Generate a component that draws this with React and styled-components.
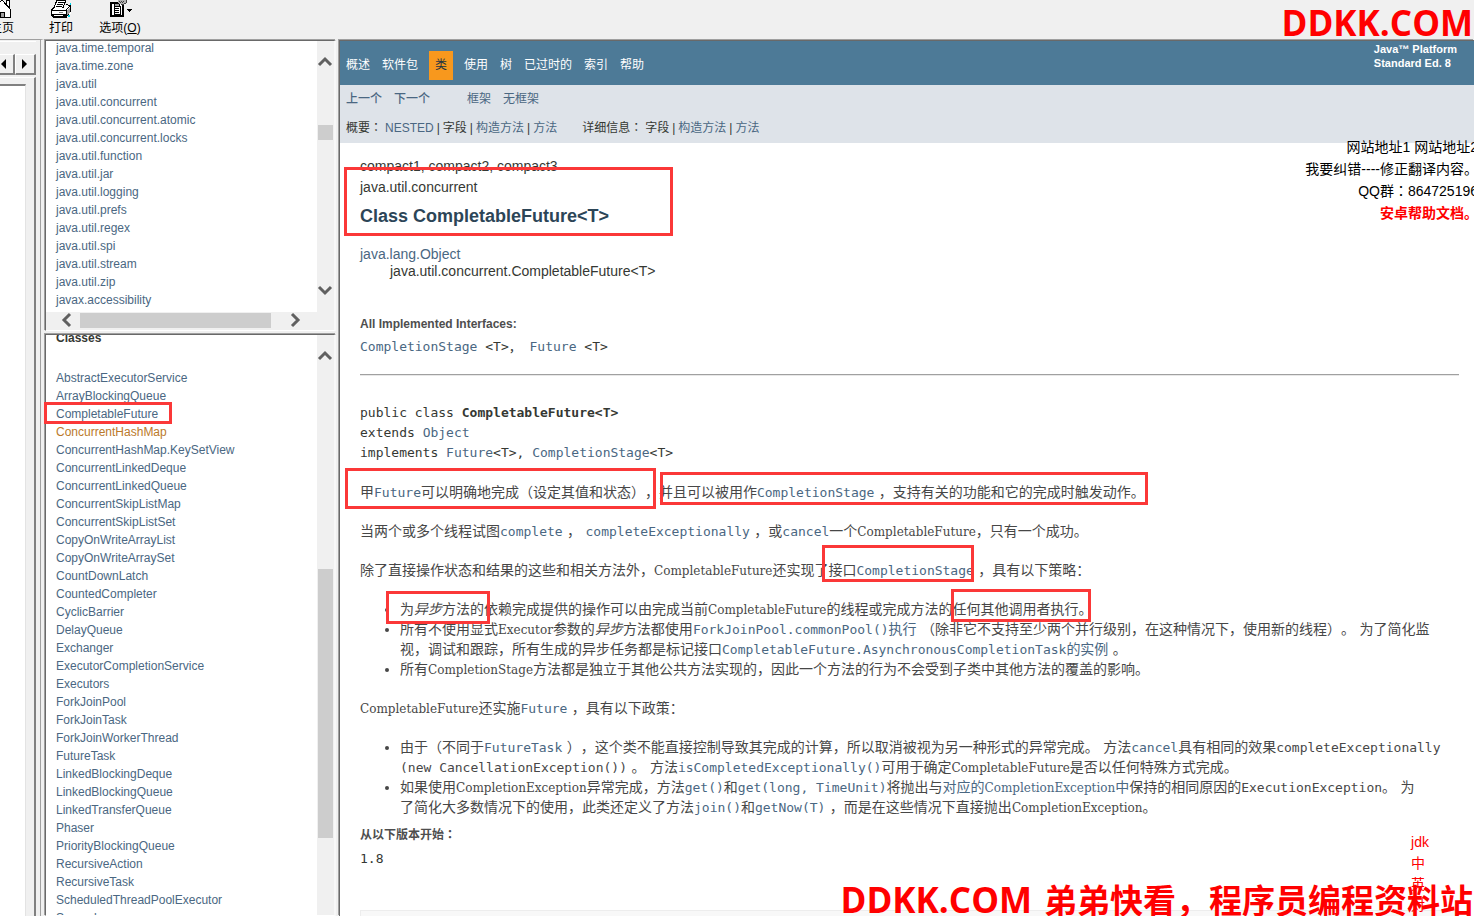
import React from "react";
import styled, { createGlobalStyle, css } from "styled-components";

const packages = [
  "java.time.temporal",
  "java.time.zone",
  "java.util",
  "java.util.concurrent",
  "java.util.concurrent.atomic",
  "java.util.concurrent.locks",
  "java.util.function",
  "java.util.jar",
  "java.util.logging",
  "java.util.prefs",
  "java.util.regex",
  "java.util.spi",
  "java.util.stream",
  "java.util.zip",
  "javax.accessibility",
];

const classes = [
  "AbstractExecutorService",
  "ArrayBlockingQueue",
  "CompletableFuture",
  "ConcurrentHashMap",
  "ConcurrentHashMap.KeySetView",
  "ConcurrentLinkedDeque",
  "ConcurrentLinkedQueue",
  "ConcurrentSkipListMap",
  "ConcurrentSkipListSet",
  "CopyOnWriteArrayList",
  "CopyOnWriteArraySet",
  "CountDownLatch",
  "CountedCompleter",
  "CyclicBarrier",
  "DelayQueue",
  "Exchanger",
  "ExecutorCompletionService",
  "Executors",
  "ForkJoinPool",
  "ForkJoinTask",
  "ForkJoinWorkerThread",
  "FutureTask",
  "LinkedBlockingDeque",
  "LinkedBlockingQueue",
  "LinkedTransferQueue",
  "Phaser",
  "PriorityBlockingQueue",
  "RecursiveAction",
  "RecursiveTask",
  "ScheduledThreadPoolExecutor",
  "Semaphore",
];

// red frames drawn over the page
const marks = [
  { x: 344, y: 167, w: 329, h: 69 },
  { x: 44, y: 402, w: 128, h: 22 },
  { x: 345, y: 468, w: 311, h: 41 },
  { x: 660, y: 472, w: 488, h: 33 },
  { x: 822, y: 545, w: 152, h: 37 },
  { x: 386, y: 591, w: 104, h: 33 },
  { x: 951, y: 589, w: 140, h: 33 },
];

const Chevron = ({ dir }) => {
  const points = {
    up: "2,11 8,5 14,11",
    down: "2,5 8,11 14,5",
    left: "11,2 5,8 11,14",
    right: "5,2 11,8 5,14",
  };
  return (
    <svg width="16" height="16" viewBox="0 0 16 16">
      <polyline points={points[dir]} fill="none" stroke="#606060" strokeWidth="3" />
    </svg>
  );
};

const HomeIcon = () => (
  <svg width="24" height="20" viewBox="0 0 24 20" shapeRendering="crispEdges">
    <path d="M4 9h16v9H4z" fill="#fff" />
    <path d="M16 0h3v7h-3z" fill="#fff" stroke="#000" />
    <path d="M2 10L12 0l9 10" fill="#fff" stroke="#000" strokeWidth="1" />
    <path d="M4 9v8h16V9" fill="none" stroke="#000" />
    <path d="M10 12h4v5h-4z" fill="#a0a0a0" stroke="#000" />
  </svg>
);

const PrintIcon = () => (
  <svg width="24" height="20" viewBox="0 0 24 20" shapeRendering="crispEdges">
    <path d="M8 0h9l-4 10H4z" fill="#fff" stroke="#000" />
    <path d="M9 2h6M8 4h6M7 6h6" stroke="#000" />
    <path d="M2 10l3-2h9l4-4 4 3v6l-4 4H4l-2-2z" fill="#fff" />
    <path d="M2 10h15v7H4l-2-2zM17 10l4-4v6l-4 5M2 10l3-2M17 4l4 2" fill="none" stroke="#000" />
    <path d="M2 14h15v3H4z" fill="#000" />
    <path d="M5 15h9v1H5z" fill="#fff" />
    <path d="M18 10l3-3v5l-3 3z" fill="#a0a0a0" />
    <path d="M10 12h4v1h-4z" fill="#808080" />
    <path d="M19 15h2v2h-2zM21 3h1v2h-1z" fill="#00d8f0" />
  </svg>
);

const OptionsIcon = () => (
  <svg width="26" height="20" viewBox="0 0 26 20" shapeRendering="crispEdges">
    <path d="M4 3h12v13H4z" fill="#fff" stroke="#000" strokeWidth="2" />
    <path d="M7 6h6v8H7z" fill="#fff" stroke="#000" />
    <path d="M7 3h5v3H7z" fill="#a0a0a0" stroke="#000" />
    <path d="M8 8h4M8 10h4M8 12h4" stroke="#000" />
    <path d="M11 0h7l2 2-4 3-5-2z" fill="#b0b0b0" />
    <path d="M12 1h1v1h-1zM14 1h1v1h-1zM16 1h1v1h-1zM13 2h1v1h-1zM15 2h1v1h-1zM14 4h3v1h-3zM17 3h2v1h-2zM19 0h1v3h-1z" fill="#404040" />
    <path d="M20 9h5v1h-1v1h-1v1h-1v-1h-1v-1h-1z" fill="#000" />
  </svg>
);

const VerticalBar = ({ before, size, end }) => (
  <VBar>
    <ArrowButton aria-label="scroll up">
      <Chevron dir="up" />
    </ArrowButton>
    <VTrack>
      <VThumb style={{ marginTop: before, height: size }} />
    </VTrack>
    {end && (
      <ArrowButton aria-label="scroll down">
        <Chevron dir="down" />
      </ArrowButton>
    )}
  </VBar>
);

const App = () => (
  <Page>
    <GlobalStyle />
    <Toolbar>
      <Tool $w={60}>
        <HomeIcon />
        <span>主页</span>
      </Tool>
      <Tool $w={58}>
        <PrintIcon />
        <span>打印</span>
      </Tool>
      <Tool $w={60}>
        <OptionsIcon />
        <span>
          选项(<u>O</u>)
        </span>
      </Tool>
      <Brand>DDKK.COM</Brand>
    </Toolbar>
    <Body>
      <Side>
        <SidePanel>
          <TabButtons>
            <TabButton aria-label="previous tab">
              <svg width="5" height="10" viewBox="0 0 5 10">
                <path d="M5 0v10L0 5z" />
              </svg>
            </TabButton>
            <TabButton aria-label="next tab">
              <svg width="5" height="10" viewBox="0 0 5 10">
                <path d="M0 0v10l5-5z" />
              </svg>
            </TabButton>
          </TabButtons>
          <SideBox>
            <SideTree />
          </SideBox>
        </SidePanel>
      </Side>
      <Frames>
        <Frame>
          <FrameList $shift={2}>
            {packages.map((name) => (
              <li key={name}>
                <a href="#">{name}</a>
              </li>
            ))}
          </FrameList>
          <VerticalBar before={54} size={15} end />
          <HBar>
            <ArrowButton aria-label="scroll left">
              <Chevron dir="left" />
            </ArrowButton>
            <HThumb />
            <ArrowButton aria-label="scroll right">
              <Chevron dir="right" />
            </ArrowButton>
          </HBar>
        </Frame>
        <Frame>
          <FrameList $shift={6}>
            <ListTitle>Classes</ListTitle>
            {classes.map((name) => (
              <ListItem key={name} $active={name === "ConcurrentHashMap"}>
                <a href="#">{name}</a>
              </ListItem>
            ))}
          </FrameList>
          <VerticalBar before={204} size={269} />
        </Frame>
      </Frames>
      <Doc>
        <TopNav>
          <NavList>
            <NavItem>
              <a href="#">概述</a>
            </NavItem>
            <NavItem>
              <a href="#">软件包</a>
            </NavItem>
            <NavItem $active>类</NavItem>
            <NavItem>
              <a href="#">使用</a>
            </NavItem>
            <NavItem>
              <a href="#">树</a>
            </NavItem>
            <NavItem>
              <a href="#">已过时的</a>
            </NavItem>
            <NavItem>
              <a href="#">索引</a>
            </NavItem>
            <NavItem>
              <a href="#">帮助</a>
            </NavItem>
          </NavList>
          <About>
            Java™ Platform
            <br />
            Standard Ed. 8
          </About>
        </TopNav>
        <SubNav>
          <SubRow $h={27}>
            <SubGroup $gap={12} $bold>
              <a href="#">上一个</a>
              <a href="#">下一个</a>
            </SubGroup>
            <SubGroup $gap={12} $before={37}>
              <a href="#">框架</a>
              <a href="#">无框架</a>
            </SubGroup>
          </SubRow>
          <SubRow $h={31}>
            <SubGroup $gap={3}>
              <span>
                概要<Colon>：</Colon>
              </span>
              <a href="#">NESTED</a>
              <span>|</span>
              <span>字段</span>
              <span>|</span>
              <a href="#">构造方法</a>
              <span>|</span>
              <a href="#">方法</a>
            </SubGroup>
            <SubGroup $gap={3} $before={25}>
              <span>
                详细信息<Colon>：</Colon>
              </span>
              <span>字段</span>
              <span>|</span>
              <a href="#">构造方法</a>
              <span>|</span>
              <a href="#">方法</a>
            </SubGroup>
          </SubRow>
        </SubNav>
        <Content>
          <Package>compact1, compact2, compact3</Package>
          <Package>java.util.concurrent</Package>
          <Title>Class CompletableFuture&lt;T&gt;</Title>
          <Tree>
            <li>
              <a href="#">java.lang.Object</a>
            </li>
            <TreeChild>java.util.concurrent.CompletableFuture&lt;T&gt;</TreeChild>
          </Tree>
          <Definition>
            <dt>All Implemented Interfaces:</dt>
            <dd>
              <a href="#">CompletionStage</a> &lt;T&gt;，{" "}
              <a href="#">Future</a> &lt;T&gt;
            </dd>
          </Definition>
          <Rule />
          <Signature>
            public class <b>CompletableFuture&lt;T&gt;</b>
            {"\n"}extends <a href="#">Object</a>
            {"\n"}implements <a href="#">Future</a>&lt;T&gt;,{" "}
            <a href="#">CompletionStage</a>&lt;T&gt;
          </Signature>
          <Block>
            甲<CodeLink href="#">Future</CodeLink>
            可以明确地完成（设定其值和状态），并且可以被用作
            <CodeLink href="#">CompletionStage</CodeLink>
            {" ，支持有关的功能和它的完成时触发动作。"}
          </Block>
          <Block>
            当两个或多个线程试图<CodeLink href="#">complete</CodeLink>
            {" ， "}
            <CodeLink href="#">completeExceptionally</CodeLink>
            {" ，或"}
            <CodeLink href="#">cancel</CodeLink>一个
            <Latin>CompletableFuture</Latin>，只有一个成功。
          </Block>
          <Block>
            除了直接操作状态和结果的这些和相关方法外，
            <Latin>CompletableFuture</Latin>还实现了接口
            <CodeLink href="#">CompletionStage</CodeLink>
            {" ，具有以下策略："}
          </Block>
          <Points>
            <li>
              为<em>异步</em>方法的依赖完成提供的操作可以由完成当前
              <Latin>CompletableFuture</Latin>
              的线程或完成方法的任何其他调用者执行。
            </li>
            <li>
              所有不使用显式<Latin>Executor</Latin>参数的<em>异步</em>方法都使用
              <CodeLink href="#">ForkJoinPool.commonPool()</CodeLink>
              <a href="#">执行</a>
              {" （除非它不支持至少两个并行级别，在这种情况下，使用新的线程）。 为了简化监"}
              <br />
              视，调试和跟踪，所有生成的异步任务都是标记接口
              <CodeLink href="#">
                CompletableFuture.AsynchronousCompletionTask
              </CodeLink>
              <a href="#">的实例</a>
              {"  。"}
            </li>
            <li>
              所有<Latin>CompletionStage</Latin>
              方法都是独立于其他公共方法实现的，因此一个方法的行为不会受到子类中其他方法的覆盖的影响。
            </li>
          </Points>
          <Block>
            <Latin>CompletableFuture</Latin>还实施
            <CodeLink href="#">Future</CodeLink>
            {" ，具有以下政策："}
          </Block>
          <Points>
            <li>
              由于（不同于<CodeLink href="#">FutureTask</CodeLink>
              {" ），这个类不能直接控制导致其完成的计算，所以取消被视为另一种形式的异常完成。 方法"}
              <CodeLink href="#">cancel</CodeLink>具有相同的效果
              <Code>completeExceptionally</Code>
              <br />
              <Code>(new CancellationException())</Code>
              {" 。 方法"}
              <CodeLink href="#">isCompletedExceptionally()</CodeLink>可用于确定
              <Latin>CompletableFuture</Latin>是否以任何特殊方式完成。
            </li>
            <li>
              如果使用<Latin>CompletionException</Latin>异常完成，方法
              <CodeLink href="#">get()</CodeLink>和
              <CodeLink href="#">get(long, TimeUnit)</CodeLink>将抛出与
              <a href="#">
                对应的<Latin>CompletionException</Latin>中
              </a>
              保持的相同原因的<Code>ExecutionException</Code>。 为
              <br />
              了简化大多数情况下的使用，此类还定义了方法
              <CodeLink href="#">join()</CodeLink>和
              <CodeLink href="#">getNow(T)</CodeLink>
              {" ，而是在这些情况下直接抛出"}
              <Latin>CompletionException</Latin>。
            </li>
          </Points>
          <Since>
            <dt>
              从以下版本开始<Colon>：</Colon>
            </dt>
            <dd>1.8</dd>
          </Since>
          <Summary />
        </Content>
        <SiteNotes>
          网站地址1 网站地址2
          <br />
          我要纠错----修正翻译内容。
          <br />
          QQ群<Colon>：</Colon>864725196
          <br />
          <strong>安卓帮助文档。</strong>
        </SiteNotes>
      </Doc>
    </Body>
    <LangSwitch>
      <a href="#">jdk</a>
      <a href="#">中</a>
      <a href="#">英</a>
      <a href="#">对</a>
    </LangSwitch>
    <Footmark>
      <span>DDKK.COM</span>
      <span>弟弟快看，程序员编程资料站</span>
    </Footmark>
    {marks.map((m) => (
      <Mark
        key={`${m.x}-${m.y}`}
        style={{ left: m.x, top: m.y, width: m.w, height: m.h }}
      />
    ))}
  </Page>
);

const sans = css`
  font-family: "Liberation Sans", "Noto Sans CJK SC", sans-serif;
`;

const mono = css`
  font-family: "DejaVu Sans Mono", "Noto Sans CJK SC", monospace;
  font-size: 13px;
`;

const GlobalStyle = createGlobalStyle`
  * {
    box-sizing: border-box;
  }

  body {
    margin: 0;
    overflow: hidden;
    background: #f0f0f0;
    text-spacing-trim: space-all;
  }

  ul, dl, dd, p, pre, h2 {
    margin: 0;
    padding: 0;
  }

  ul {
    list-style: none;
  }

  a {
    color: #4a6782;
    text-decoration: none;
  }
`;

const Page = styled.div`
  ${sans}
  position: relative;
  display: flex;
  flex-direction: column;
  height: 100vh;
  overflow: hidden;
  font-size: 12px;
  color: #353833;
`;

const Toolbar = styled.header`
  display: flex;
  flex: none;
  height: 39px;
  padding-right: 1px;
  margin-left: -28px;
`;

const Tool = styled.button`
  ${sans}
  display: flex;
  flex-direction: column;
  align-items: center;
  width: ${({ $w }) => $w}px;
  padding: 0;
  border: 0;
  background: none;
  font-size: 12px;
  line-height: 16px;
  color: #000;

  svg {
    flex: none;
  }
`;

const Brand = styled.div`
  margin-left: auto;
  font-family: "Open Sans", sans-serif;
  font-size: 35px;
  font-weight: 700;
  line-height: 46px;
  color: #ff0000;
`;

const Body = styled.div`
  display: grid;
  flex: 1;
  grid-template-columns: 44px 292px 1fr;
  min-height: 0;
`;

const Side = styled.div`
  border-top: 1px solid #a0a0a0;
  border-right: 3px solid #f0f0f0;
  box-shadow: inset -1px 0 #a0a0a0;
  padding-top: 1px;
  overflow: hidden;
`;

const SidePanel = styled.div`
  display: flex;
  flex-direction: column;
  width: 36px;
  height: 100%;
  padding-top: 12px;
  border-top: 1px solid #fff;
`;

const TabButtons = styled.div`
  display: flex;
  margin-left: -7px;
`;

const TabButton = styled.button`
  display: flex;
  align-items: center;
  justify-content: center;
  width: 22px;
  height: 21px;
  padding: 0;
  border: 1px solid #fff;
  border-right: 2px solid #808080;
  border-bottom: 2px solid #808080;
  background: #f0f0f0;
`;

const SideBox = styled.div`
  display: flex;
  flex: 1;
  margin-top: 2px;
  padding: 6px 8px 0 0;
  border-top: 1px solid #fff;
  border-right: 2px solid #808080;
`;

const SideTree = styled.div`
  flex: 1;
  border-top: 2px solid #808080;
  border-right: 1px solid #e3e3e3;
  background: #fff;
`;

const Frames = styled.div`
  display: grid;
  grid-template-rows: 291px 1fr;
  row-gap: 3px;
  min-height: 0;
  padding: 1px 0 0 1px;
`;

const Frame = styled.section`
  display: grid;
  grid-template-columns: 1fr 17px;
  grid-template-rows: 1fr auto;
  min-height: 0;
  overflow: hidden;
  border: 1px solid #696969;
  border-right: 2px solid #f8f8f8;
  border-bottom-color: #fff;
  box-shadow: -1px -1px 0 #a0a0a0;
  background: #f0f0f0;
`;

const FrameList = styled.ul`
  min-height: 0;
  overflow: hidden;
  padding-left: 10px;
  background: #fff;
  line-height: 18px;

  li:first-child {
    margin-top: -${({ $shift }) => $shift}px;
  }
`;

const ListTitle = styled.li`
  margin-bottom: 22px;
  font-weight: 700;
`;

const ListItem = styled.li`
  a {
    color: ${({ $active }) => ($active ? "#bb7a2a" : "#4a6782")};
  }
`;

const VBar = styled.div`
  display: flex;
  flex-direction: column;
  align-items: center;
  padding: 12px 0 13px;
`;

const VTrack = styled.div`
  flex: 1;
  width: 15px;
`;

const VThumb = styled.div`
  background: #cdcdcd;
`;

const HBar = styled.div`
  display: flex;
  grid-column: 1 / 3;
  align-items: center;
  height: 18px;
  padding: 0 30px 2px 13px;
`;

const HThumb = styled.div`
  flex: 1;
  height: 15px;
  margin: 0 16px 0 4px;
  background: #cdcdcd;
`;

const ArrowButton = styled.button`
  display: flex;
  flex: none;
  width: 17px;
  height: 18px;
  padding: 1px 0;
  border: 0;
  background: none;
`;

const Doc = styled.main`
  position: relative;
  display: flex;
  flex-direction: column;
  min-width: 0;
  min-height: 0;
  margin: 1px 0 0 3px;
  border-top: 1px solid #696969;
  border-left: 1px solid #696969;
  box-shadow: -1px -1px 0 #a0a0a0;
  background: #fff;
`;

const TopNav = styled.nav`
  display: flex;
  flex: none;
  justify-content: space-between;
  height: 44px;
  background: #4d7a97;
`;

const NavList = styled.ul`
  display: flex;
  padding-top: 10px;
`;

const NavItem = styled.li`
  height: 29px;
  margin: ${({ $active }) => ($active ? "0 5px" : "0")};
  padding: 0 6px;
  background: ${({ $active }) => ($active ? "#f8981d" : "transparent")};
  line-height: 29px;
  color: #253441;

  a {
    color: #fff;
  }
`;

const About = styled.div`
  padding: 1px 17px 0 0;
  font-size: 11px;
  font-weight: 700;
  line-height: 14px;
  color: #fff;
`;

const SubNav = styled.nav`
  flex: none;
  padding-left: 6px;
  background: #dee3e9;
`;

const SubRow = styled.div`
  display: flex;
  align-items: center;
  height: ${({ $h }) => $h}px;
  line-height: 18px;
`;

const SubGroup = styled.div`
  display: flex;
  gap: ${({ $gap }) => $gap}px;
  margin-left: ${({ $before }) => $before || 0}px;
  font-weight: ${({ $bold }) => ($bold ? 500 : 400)};
`;

// full-width colon that sits in the middle of its square
const Colon = styled.span`
  font-family: "Noto Sans CJK TC", sans-serif;
  line-height: 1;
`;

const Content = styled.article`
  display: flex;
  flex: 1;
  flex-direction: column;
  min-height: 0;
  padding: 13px 15px 0 20px;
  font-size: 14px;
  line-height: 20px;

  > * {
    flex: none;
  }
`;

const Package = styled.div`
  margin-bottom: 1px;
`;

const Title = styled.h2`
  margin-top: 6px;
  font-size: 18px;
  line-height: 24px;
  color: #2c4557;
`;

const Tree = styled.ul`
  margin-top: 18px;
  line-height: 17px;
`;

const TreeChild = styled.li`
  padding-left: 30px;
`;

const Definition = styled.dl`
  margin-top: 34px;

  dt {
    font-size: 12px;
    font-weight: 700;
    color: #4e4e4e;
  }

  dd {
    ${mono}
    margin-top: 3px;
  }
`;

const Rule = styled.hr`
  width: 100%;
  margin: 17px 0 27px;
  border: 0;
  border-top: 1px solid #a0a0a0;
  border-bottom: 1px solid #e8e8e8;
`;

const Signature = styled.pre`
  ${mono}
`;

const prose = css`
  font-family: "DejaVu Serif", "Noto Sans CJK SC", serif;
  color: #474747;
`;

const Block = styled.p`
  ${prose}
  margin-top: 19px;
`;

const Points = styled.ul`
  ${prose}
  margin-top: 19px;
  padding-left: 40px;
  list-style: disc;
`;

const Code = styled.code`
  ${mono}
  line-height: 1;
`;

const CodeLink = styled.a`
  ${mono}
  line-height: 1;
`;

const Latin = styled.span`
  font-size: 12px;
  line-height: 1;
`;

const Since = styled.dl`
  margin-top: 8px;

  dt {
    font-size: 12px;
    font-weight: 700;
    color: #4e4e4e;
  }

  dd {
    ${mono}
    margin-top: 4px;
  }
`;

const Summary = styled.div`
  height: 40px;
  margin-top: 41px;
  border: 1px solid #ededed;
  background: #f8f8f8;
`;

const SiteNotes = styled.aside`
  position: absolute;
  top: 95px;
  right: -4px;
  font-size: 14px;
  line-height: 22px;
  text-align: right;
  white-space: nowrap;
  color: #000;

  strong {
    color: #ff0000;
  }
`;

const LangSwitch = styled.nav`
  position: absolute;
  right: 45px;
  bottom: 0;
  display: flex;
  flex-direction: column;
  font-size: 14px;
  line-height: 21px;

  a {
    color: #ff0000;
  }
`;

const Footmark = styled.div`
  position: absolute;
  right: 1px;
  bottom: -8px;
  display: flex;
  align-items: baseline;
  gap: 12px;
  font-family: "Open Sans", "Noto Sans CJK SC", sans-serif;
  font-size: 33px;
  font-weight: 700;
  line-height: 46px;
  white-space: nowrap;
  color: #ff0000;

  span:first-child {
    font-size: 35px;
  }
`;

const Mark = styled.div`
  position: absolute;
  border: 3px solid #fb3838;
  pointer-events: none;
`;

export default App;
